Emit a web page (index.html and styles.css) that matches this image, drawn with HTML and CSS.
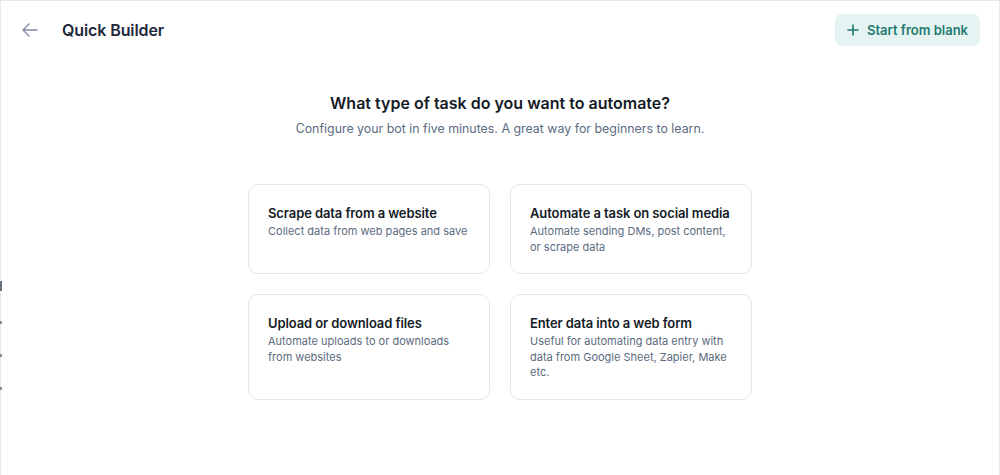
FILE: index.html
```html
<!DOCTYPE html>
<html lang="en">
	<head>
		<meta charset="utf-8">
		<title>Quick Builder</title>
		<link rel="stylesheet" href="styles.css">
	</head>
	<body>
		<div class="page">
			<div class="edge-marks">
				<span class="mark tall"></span>
				<span class="mark"></span>
				<span class="mark"></span>
				<span class="mark"></span>
			</div>
			<header class="topbar">
				<div class="title-group">
					<button class="back" aria-label="Back">
						<svg width="20" height="20" viewBox="0 0 20 20" fill="none" stroke="#7c8aa5" stroke-width="1.4" stroke-linecap="round" stroke-linejoin="round">
							<path d="M17 10H3M9 4l-6 6 6 6"/>
						</svg>
					</button>
					<h1>Quick Builder</h1>
				</div>
				<button class="blank">
					<svg width="12" height="12" viewBox="0 0 12 12" fill="none" stroke="#1f7a70" stroke-width="1.6" stroke-linecap="round">
						<path d="M6 1v10M1 6h10"/>
					</svg>
					Start from blank
				</button>
			</header>

			<main class="content">
				<h2>What type of task do you want to automate?</h2>
				<p class="lead">Configure your bot in five minutes. A great way for beginners to learn.</p>

				<div class="cards">
					<div class="card">
						<h3>Scrape data from a website</h3>
						<p>Collect data from web pages and save</p>
					</div>
					<div class="card">
						<h3>Automate a task on social media</h3>
						<p>Automate sending DMs, post content, or scrape data</p>
					</div>
					<div class="card">
						<h3>Upload or download files</h3>
						<p>Automate uploads to or downloads from websites</p>
					</div>
					<div class="card">
						<h3>Enter data into a web form</h3>
						<p>Useful for automating data entry with data from Google Sheet, Zapier, Make etc.</p>
					</div>
				</div>
			</main>
		</div>
	</body>
</html>
```
FILE: styles.css
```css
* {
	box-sizing: border-box;
}
body {
	margin: 0;
	font-family: Inter, "Noto Sans", sans-serif;
	background-color: #FFF;
	color: #1c2433;
}
.page {
	position: relative;
	height: 475px;
	border: 1px solid #e6e8eb;
	border-bottom: none;
}

.edge-marks {
	position: absolute;
	left: -1px;
	top: 280px;
	display: flex;
	flex-direction: column;
	gap: 30px;
}
.mark {
	width: 2px;
	height: 3px;
	background-color: #8a919c;
}
.mark.tall {
	height: 10px;
	background-color: #6b7280;
}

.topbar {
	display: flex;
	align-items: center;
	justify-content: space-between;
	padding: 13px 19px 0 19px;
}
.title-group {
	display: flex;
	align-items: center;
	gap: 22px;
}
.back {
	display: flex;
	padding: 0;
	border: none;
	background: none;
}
h1 {
	margin: 0;
	font-size: 16px;
	font-weight: 600;
	color: #1e293b;
	letter-spacing: -0.1px;
}
.blank {
	display: flex;
	align-items: center;
	gap: 8px;
	height: 32px;
	padding: 0 12px;
	border: none;
	border-radius: 7px;
	background-color: #e5f4f3;
	color: #1f7a70;
	font-family: inherit;
	font-size: 13px;
	font-weight: 600;
}

.content {
	display: flex;
	flex-direction: column;
	align-items: center;
	padding-top: 47px;
}
h2 {
	margin: 0;
	font-size: 16px;
	font-weight: 600;
	color: #151b26;
}
.lead {
	margin: 8px 0 0;
	font-size: 12.4px;
	color: #5b6b80;
}

.cards {
	display: grid;
	grid-template-columns: 242px 242px;
	gap: 20px;
	margin-top: 48px;
}
.card {
	padding: 20px 10px 18px 19px;
	border: 1px solid #e3e8ef;
	border-radius: 10px;
}
.card h3 {
	margin: 0 0 3px;
	font-size: 13px;
	font-weight: 600;
	color: #151b26;
	letter-spacing: -0.1px;
}
.card p {
	margin: 0;
	padding-right: 8px;
	font-size: 11px;
	line-height: 15.5px;
	color: #5b6b80;
}
```
